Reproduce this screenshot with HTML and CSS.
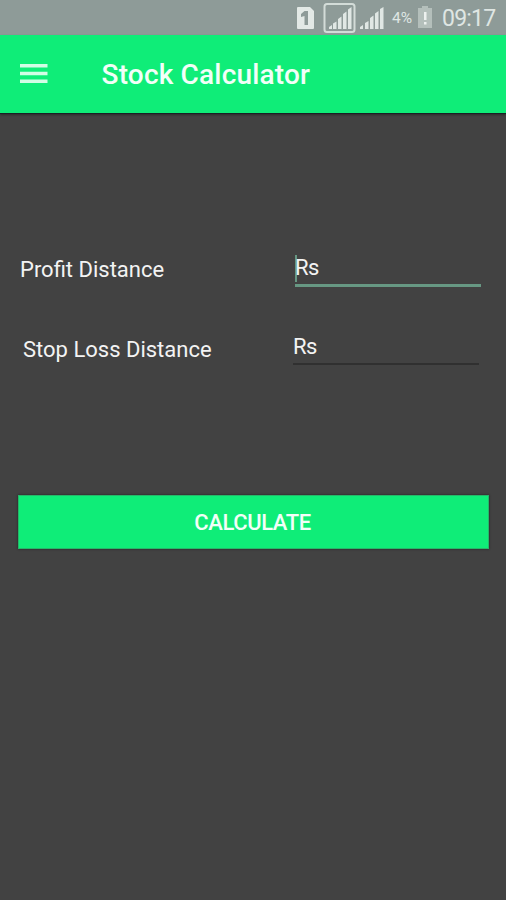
FILE: index.html
```html
<!DOCTYPE html>
<html lang="en">
<head>
    <meta charset="UTF-8">
    <meta name="viewport" content="width=device-width, initial-scale=1.0">
    <title>Stock Calculator</title>
    <link rel="stylesheet" href="styles.css">
</head>
<body>
    <div class="status-bar">
        <svg class="status-icons" width="90" height="34" viewBox="0 0 90 34">
            <path fill="#e3e9e6" fill-rule="evenodd" d="M2 6H14L18 10V27Q18 28 17 28H2Q1 28 1 27V7Q1 6 2 6ZM8.500 10L5 13V16L8.500 15V24H12V10Z"/>
            <rect x="28.5" y="3" width="30" height="28" rx="2.5" fill="none" stroke="#d3dcd8" stroke-width="2"/>
            <path fill="#e0e7e4" d="M33 26l3-2v4h-3zM37 22.500l3.500-2v7.500h-3.500zM42 18l3.500-2.500v12.500h-3.500zM47 13l3.500-2.500v17.500h-3.500zM52 8.500l3.500-2.500v22h-3.500z"/>
            <path fill="#e0e7e4" d="M64 26l3-2v4h-3zM69 22l3.500-2v8h-3.500zM74 17l3.500-2.500v13.500h-3.500zM79 12.500l3.500-2.500v18h-3.500zM84 8l3.500-2v22h-3.500z"/>
        </svg>
        <span class="battery-level">4%</span>
        <svg class="battery" width="14" height="22" viewBox="0 0 14 22">
            <path fill="#b4bfbb" d="M4 0h6v2h4v20H0V2h4z"/>
            <path fill="#edf1ef" d="M6 6h2.500v8H6zM6 16h2.500v2.500H6z"/>
        </svg>
        <span class="clock">09:17</span>
    </div>

    <header>
        <svg class="menu-icon" width="28" height="20" viewBox="0 0 28 20">
            <path fill="#d2fde5" d="M0 0h27.500v3.400H0zM0 7.800h27.500v3.400H0zM0 15.600h27.500V19H0z"/>
        </svg>
        <h1>Stock Calculator</h1>
    </header>

    <div class="container">
        <div class="form-group">
            <label>Profit Distance</label>
            <div class="field active">Rs</div>
        </div>
        <div class="form-group stop-loss">
            <label>Stop Loss Distance</label>
            <div class="field">Rs</div>
        </div>
        <button>CALCULATE</button>
    </div>
</body>
</html>
```

FILE: styles.css
```css
* {
    box-sizing: border-box;
}
body {
    font-family: Roboto, sans-serif;
    background-color: #424242;
    color: #f3f3f3;
    margin: 0;
    min-height: 900px;
}
.status-bar {
    display: flex;
    align-items: center;
    height: 35px;
    padding-left: 296px;
    background-color: #8e9b98;
    color: #dfe6e3;
}
.status-icons {
    flex: none;
}
.battery-level {
    width: 22px;
    margin-left: 6px;
    font-size: 15.5px;
    line-height: 20px;
    padding-top: 1px;
}
.battery {
    flex: none;
    margin-left: 4px;
    margin-bottom: 2px;
}
.clock {
    margin-left: 10px;
    font-size: 23px;
    line-height: 34px;
    letter-spacing: -0.8px;
    padding-top: 3px;
}
header {
    display: flex;
    align-items: center;
    height: 79px;
    padding-left: 20px;
    background-color: #0fed78;
    border-bottom: 1px solid #1b2026;
    box-shadow: 0 1px 2px rgba(0, 0, 0, 0.35);
}
.menu-icon {
    flex: none;
    margin-bottom: 1px;
}
h1 {
    margin: 1px 0 0 53.5px;
    font-size: 28px;
    font-weight: 500;
    line-height: 36px;
    letter-spacing: 0.18px;
    color: #f2fff8;
}
.container {
    padding: 138px 17px 0 18px;
}
.form-group {
    display: flex;
    height: 79px;
    padding-left: 2px;
}
label {
    width: 275px;
    padding-top: 3px;
    font-size: 22px;
    line-height: 30px;
}
.field {
    width: 186px;
    height: 35px;
    font-size: 22px;
    line-height: 32px;
    letter-spacing: -0.5px;
    border-bottom: 3px solid #679883;
}
.active {
    background: linear-gradient(#679883, #679883) no-repeat 0 3px / 2px 27px;
}
.stop-loss {
    height: 164px;
    padding-left: 5px;
}
.stop-loss label {
    width: 270px;
    padding-top: 4px;
}
.stop-loss .field {
    height: 34px;
    border-bottom: 2px solid #303030;
}
button {
    display: block;
    width: 100%;
    height: 54px;
    padding: 1px 2px 0 0;
    background-color: #0fed78;
    color: #f2fff8;
    font-family: Roboto, sans-serif;
    font-size: 22px;
    font-weight: 500;
    letter-spacing: -0.4px;
    border: 1px solid #25b869;
    border-radius: 0;
    box-shadow: 0 0 2px rgba(20, 15, 20, 0.7);
}
```
